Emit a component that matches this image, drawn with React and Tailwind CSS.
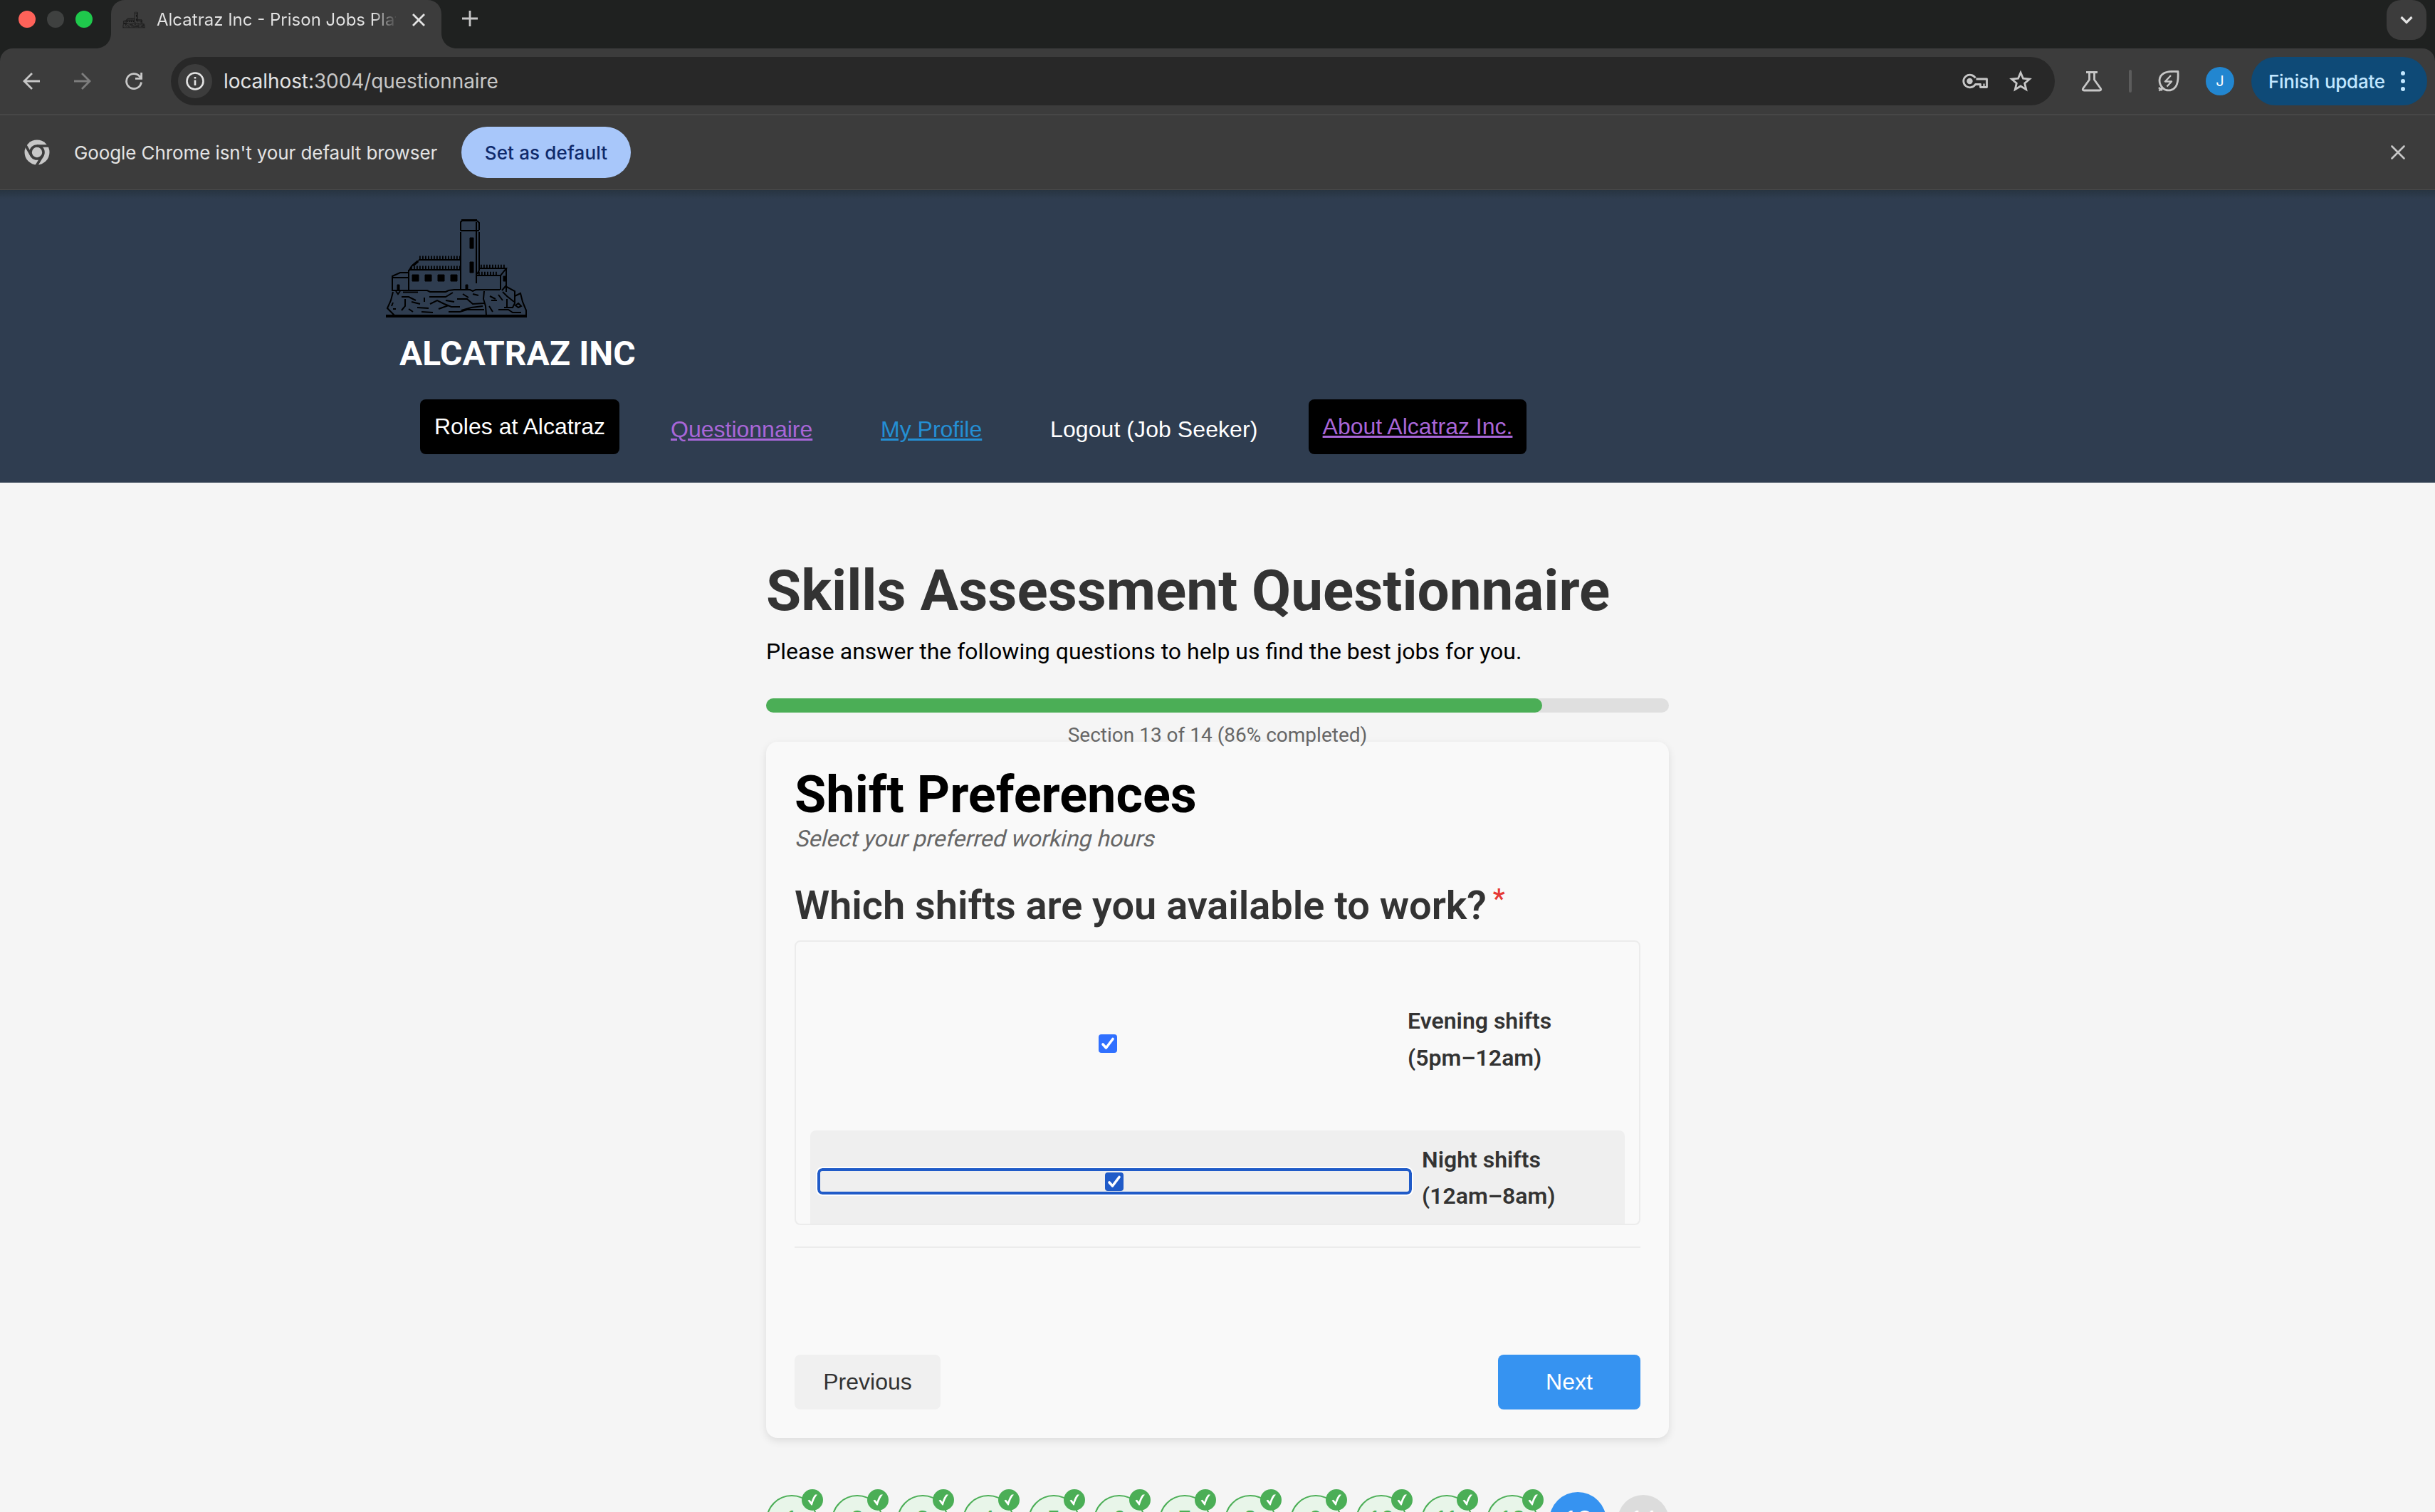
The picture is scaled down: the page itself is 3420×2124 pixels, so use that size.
import React from "react";

function LogoArt({ className, color = "#000", line = 2 }) {
  return (
    <svg viewBox="0 0 198 138" className={className} fill="none" stroke={color} strokeWidth={line}>
      <path d="M0 136H198" strokeWidth="4" />
      <path d="M106 1.500H128" strokeWidth="3" />
      <path d="M105 16V4L107 2M105 16H131M105 18V98M127 4V90M128 2L131 5V15M131 18V72M127 4V16" />
      <path d="M118 26h5v15h-5zM118 60h5v15h-5zM112 92h3v7h-3z" fill={color} strokeWidth="1" />
      <path d="M46 57H104M46 58L36 66L32 73M32 71V100M32 71H104" />
      <path d="M38 65L45 59" strokeWidth="3.500" />
      <path d="M47 54H104" strokeWidth="5" strokeDasharray="1.800 2.200" />
      <path d="M35 68H104" strokeWidth="5" strokeDasharray="1.800 2.200" />
      <path d="M37 78h9v9h-9zM55 78h9v9h-9zM73 78h9v9h-9zM91 78h9v9h-9z" fill={color} strokeWidth="1" />
      <path d="M31 82H9V100H31M9 82V80L20 75H31" />
      <path d="M16 92h3v8h-3z" fill={color} strokeWidth="1" />
      <path d="M128 79H161L169 69H131M161 79V99M169 69V102M131 72L128 77" />
      <path d="M133 66H169M130 76H158" strokeWidth="4.500" strokeDasharray="1.800 2.200" />
      <path d="M165 80h3v7h-3z" fill={color} strokeWidth="1" />
      <path d="M9 100H58L62 102H84L88 100L96 99H118L122 101L126 99H160" />
      <path d="M10 102L7 114L2 125L12 135M14 101L17 105L20 101M24 102.500H45M22 109H32L42 114M27 112V122L22 128M36 116L48 119M54 110V116M61 109H84L94 103M62 119L72 114L82 119L92 123H104M44 124L60 125M50 130L66 131M74 126L88 121M88 130H104L114 127H138M100 112H114L122 119L138 118M108 105L116 110M122 105L130 107M106 128L120 124L136 122M138 101L137 112L140 122L141 135M146 108L154 112M148 114H156M145 122L150 130M158 106L164 114M158 127H172L178 131H190M163 100L168 94L181 101V118L178 124H166M181 108L189 104L192 116L197 128V135M170 112V124M186 118L190 122L186 124L182 121ZM164 102L170 108L180 116M10 117L8 122M10 126H14M32 126L38 130M84 114L96 116" />
    </svg>
  );
}

function TabShape() {
  return (
    <svg className="block h-[68px] w-[508px]" viewBox="0 0 508 68" fill="#3c3c3c">
      <path d="M0 68C14 68 22 58 22 46V20C22 8 30 0 42 0H466C478 0 486 8 486 20V46C486 58 494 68 508 68Z" />
    </svg>
  );
}

function TabStrip() {
  return (
    <div className="flex h-[68px] bg-[#1f2120]">
      <div className="flex items-center gap-4 pl-[26px] pb-[14px]">
        <span className="size-6 rounded-full bg-[#ff6259]" />
        <span className="size-6 rounded-full bg-[#3f4140]" />
        <span className="size-6 rounded-full bg-[#1fc94c]" />
      </div>
      <div className="relative ml-[4px] w-[508px]">
        <TabShape />
        <div className="absolute inset-0 flex items-center pb-[12px] pl-[38px]">
          <LogoArt className="h-[30px] w-8" color="#151515" line={4} />
          <span className="ml-[16px] w-[336px] overflow-hidden whitespace-nowrap bg-linear-to-r from-[#e3e3e3] from-90% to-[#e3e3e3]/10 bg-clip-text text-[24px] leading-8 text-transparent">
            Alcatraz Inc - Prison Jobs Platform
          </span>
          <svg className="ml-[23px] size-[18px]" viewBox="0 0 18 18" stroke="#e3e3e3" strokeWidth="2.800">
            <path d="M1 1L17 17M17 1L1 17" />
          </svg>
        </div>
      </div>
      <svg className="ml-[7px] mt-[15px] size-[22px]" viewBox="0 0 22 22" stroke="#c7c7c7" strokeWidth="2.800">
        <path d="M11 0V22M0 11H22" />
      </svg>
      <div className="ml-auto mr-3 flex h-14 w-14 items-center justify-center rounded-[20px] bg-[#3c3c3c]">
        <svg className="size-[18px]" viewBox="0 0 18 18" fill="none" stroke="#e3e3e3" strokeWidth="3.200">
          <path d="M1.500 5L9 12.500L16.500 5" />
        </svg>
      </div>
    </div>
  );
}

function Toolbar() {
  return (
    <div className="bg-[#1f2120]">
      <div className="flex h-[92px] items-center rounded-t-[18px] bg-[#3c3c3c]">
        <svg className="ml-8 size-6" viewBox="0 0 24 24" fill="none" stroke="#c7c7c7" strokeWidth="2.800">
          <path d="M24 12H2M13 1L2 12L13 23" />
        </svg>
        <svg className="ml-12 size-6" viewBox="0 0 24 24" fill="none" stroke="#7d7d7d" strokeWidth="2.800">
          <path d="M0 12H22M11 1L22 12L11 23" />
        </svg>
        <svg className="ml-12 size-6" viewBox="0 0 24 24" fill="none" stroke="#c7c7c7" strokeWidth="2.800">
          <path d="M22.500 13.500A10.500 10.500 0 1 1 20 5.200L22.500 8M22.600 0V8.400H14" />
        </svg>
        <div className="ml-10 flex h-[68px] w-[2646px] items-center rounded-full bg-[#282828] pl-[10px] pr-8">
          <span className="flex size-12 items-center justify-center rounded-full bg-[#3c3c3c]">
            <svg className="size-[26px]" viewBox="0 0 26 26" fill="none" stroke="#e3e3e3" strokeWidth="2.600">
              <circle cx="13" cy="13" r="11.500" />
              <path d="M13 11.500V19M13 7V9.600" />
            </svg>
          </span>
          <span className="ml-4 text-[28px] leading-9 tracking-[-0.08px] text-[#c7c7c7]">
            <span className="text-[#e3e3e3]">localhost:</span>3004/questionnaire
          </span>
          <svg className="ml-auto h-6 w-[37px]" viewBox="0 0 37 24" fill="none" stroke="#c7c7c7" strokeWidth="2.800">
            <path d="M18.500 7.500A9 8.800 0 1 0 18.500 16.500H25.500V20.500H34.500V9H19.500" strokeLinejoin="round" />
            <path d="M30.500 15.500V20" strokeWidth="2.200" />
            <circle cx="10.500" cy="12" r="4.200" fill="#c7c7c7" stroke="none" />
          </svg>
          <svg className="ml-[29px] size-8" viewBox="0 0 32 32" fill="none" stroke="#c7c7c7" strokeWidth="2.800">
            <path d="M16 4L19.500 12.200L28.500 13L21.700 18.900L23.700 27.600L16 23L8.300 27.600L10.300 18.900L3.500 13L12.500 12.200Z" />
          </svg>
        </div>
        <svg className="ml-[36px] h-[30px] w-8" viewBox="0 0 32 30" fill="none" stroke="#c7c7c7" strokeWidth="2.800" strokeLinejoin="round">
          <path d="M8 2.500H24M12.500 3V13L3.500 25.500Q2.500 28 5 28H27Q29.500 28 28.500 25.500L19.500 13V3" />
        </svg>
        <span className="ml-9 h-8 w-1 rounded-full bg-[#5c5c5c]" />
        <svg className="ml-9 size-[32px]" viewBox="0 0 32 32" fill="none" stroke="#c7c7c7" strokeWidth="2.800" strokeLinejoin="round">
          <path d="M2.500 29.500L7 25C1 18 2 9 9 5Q15 1.500 29 2.500Q30 17 26 23.500C21 30.500 12 30.500 7 25M2 25L7 29" />
          <path d="M19 8L11 16.500H20L13.500 23.500" strokeWidth="2.400" />
        </svg>
        <span className="ml-9 flex size-10 items-center justify-center rounded-full bg-[#2286d0] text-[20px] text-white">J</span>
        <div className="ml-[24px] flex h-[68px] w-[247px] items-center rounded-full bg-[#0e4a77] pl-6">
          <span className="w-[164px] whitespace-nowrap text-[26px] font-medium tracking-[-0.25px] text-[#c2e7ff]">Finish update</span>
          <svg className="ml-[22px] h-7 w-[6px]" viewBox="0 0 6 28" fill="#c2e7ff">
            <circle cx="3" cy="3" r="3" />
            <circle cx="3" cy="14" r="3" />
            <circle cx="3" cy="25" r="3" />
          </svg>
        </div>
      </div>
    </div>
  );
}

function InfoBar() {
  return (
    <div className="flex h-[107px] items-center border-b border-t-2 border-b-[#4a4a4a] border-t-[#474747] bg-[#3c3c3c] pl-[34px]">
      <svg className="size-9" viewBox="0 0 36 36">
        <circle cx="18" cy="18" r="17.500" fill="#c7c7c7" />
        <circle cx="18" cy="18" r="9" fill="#c7c7c7" stroke="#3c3c3c" strokeWidth="3.600" />
        <path d="M18 9H36M10.200 22.500L1.500 7.500M25.800 22.500L17 37" stroke="#3c3c3c" strokeWidth="3.600" />
      </svg>
      <span className="ml-[34px] w-[510px] whitespace-nowrap text-[26px] tracking-[-0.1px] text-[#e3e3e3]">
        Google Chrome isn&apos;t your default browser
      </span>
      <button className="ml-[34px] h-[72px] w-[238px] rounded-full bg-[#a8c7fa] text-[26px] font-medium tracking-[0.15px] text-[#0f2a6b]">
        Set as default
      </button>
      <svg className="ml-auto mr-[42px] size-5" viewBox="0 0 20 20" stroke="#c7c7c7" strokeWidth="2.600" strokeLinecap="round">
        <path d="M1.500 1.500L18.500 18.500M18.500 1.500L1.500 18.500" />
      </svg>
    </div>
  );
}

function SiteHeader() {
  return (
    <header className="h-[411px] bg-[#2f3d50] bg-linear-to-b from-[#273441] from-0% to-[#2f3d50] to-[3%] pl-[542px] pt-[41px]">
      <LogoArt className="block h-[138px] w-[198px]" />
      <div className="ml-[19px] mt-[21px] h-[60px] whitespace-nowrap font-[Roboto] text-[48px] font-bold leading-[60px] tracking-[0.1px] text-white">
        ALCATRAZ INC
      </div>
      <nav className="ml-12 mt-[34px] flex h-[77px] items-start whitespace-nowrap font-['Liberation_Sans',Arial,sans-serif] text-[32px] leading-[37px] text-white">
        <a className="h-[77px] w-[280px] rounded-[8px] bg-black pt-5 text-center">Roles at Alcatraz</a>
        <a className="ml-[72px] mt-6 w-[199px] text-[#a866d8] underline">Questionnaire</a>
        <a className="ml-[96px] mt-6 w-[143px] text-[#248fd4] underline">My Profile</a>
        <a className="ml-[95px] mt-6 w-[290px] tracking-[0.08px]">Logout (Job Seeker)</a>
        <a className="ml-[73px] h-[77px] w-[306px] rounded-[8px] bg-black pt-5 text-center text-[#a866d8] underline">
          About Alcatraz Inc.
        </a>
      </nav>
    </header>
  );
}

function CheckBox({ className }) {
  return (
    <span className={"flex size-[26px] items-center justify-center rounded-[4px] " + className}>
      <svg className="size-[22px]" viewBox="0 0 22 22" fill="none" stroke="#fff" strokeWidth="3.600" strokeLinecap="round" strokeLinejoin="round">
        <path d="M4 12L8.500 17L18 4.500" />
      </svg>
    </span>
  );
}

function ShiftOptions() {
  return (
    <div className="h-[400px] overflow-hidden rounded-[8px] border-2 border-[#ececec] px-5">
      <div className="flex h-[265px] items-center pt-[20px]">
        <div className="flex w-[836px] justify-center">
          <CheckBox className="bg-[#3070ff]" />
        </div>
        <div className="ml-[3px] pb-[12px] leading-[52px]">Evening shifts<br />(5pm–12am)</div>
      </div>
      <div className="flex h-[160px] items-start rounded-[8px] bg-[#efefef] pl-[10px]">
        <div className="mt-[53px] flex h-[37px] w-[835px] items-center justify-center rounded-[7px] border-4 border-[#205bc8] pr-[2px] outline-2 outline-white">
          <CheckBox className="bg-[#205bc8]" />
        </div>
        <div className="ml-[14px] pt-[16px] leading-[51px]">Night shifts<br />(12am–8am)</div>
      </div>
    </div>
  );
}

function Step({ n }) {
  if (n === 13)
    return (
      <span className="-m-1 flex size-20 shrink-0 items-center justify-center rounded-full bg-[#3693f1] pb-[6px] text-[35px] text-white">13</span>
    );
  if (n === 14)
    return <span className="flex size-[72px] shrink-0 items-center justify-center rounded-full bg-[#dcdcdc] pb-[6px] text-white">14</span>;
  return (
    <span className="relative flex size-[72px] shrink-0 items-center justify-center rounded-full border-2 border-[#4bae56] bg-[#e8f5e9] pb-[6px] text-[#4bae56]">
      {n}
      <span className="absolute -right-[10px] -top-[10px] flex size-[30px] items-center justify-center rounded-full bg-[#4bae56]">
        <svg className="h-[16px] w-[14px]" viewBox="0 0 14 16" fill="#fff">
          <path d="M0.500 8.800L3 7.800L5.500 10.800C6.800 6.500 8.800 2.500 11 0.500H14C10.800 4 8.500 9 6.800 15.500H5.500Z" />
        </svg>
      </span>
    </span>
  );
}

const steps = [1, 2, 3, 4, 5, 6, 7, 8, 9, 10, 11, 12, 13, 14];

function Questionnaire() {
  return (
    <main className="mx-auto flex w-[1268px] flex-col pt-[105px] font-[Roboto]">
      <h1 className="h-[94px] whitespace-nowrap text-[80px] font-bold leading-[94px] text-[#333]">Skills Assessment Questionnaire</h1>
      <p className="mt-[12px] h-[52px] whitespace-nowrap text-[32px] leading-[52px] text-black">
        Please answer the following questions to help us find the best jobs for you.
      </p>
      <div className="mt-[40px] h-5 rounded-[10px] bg-[#dfdfdf]">
        <div className="h-5 w-[86%] rounded-[10px] bg-[#4bae56]" />
      </div>
      <p className="relative mt-[10px] h-[31px] text-center text-[28px] leading-[44px] text-[#666]">Section 13 of 14 (86% completed)</p>
      <section className="h-[978px] rounded-[16px] bg-[#f9f9f9] px-10 shadow-[0_4px_12px_rgba(0,0,0,0.1)]">
        <h2 className="h-[84px] pt-[33px] text-[72px] font-bold leading-[84px] text-black">Shift Preferences</h2>
        <p className="mt-[26px] h-[52px] text-[32px] leading-[52px] text-[#666]">
          <span className="inline-block origin-[0_37px] -skew-x-[14deg]">Select your preferred working hours</span>
        </p>
        <h3 className="mt-[32px] flex h-[85px] items-start text-[56px] font-semibold leading-[72px] tracking-[-0.06px] text-[#333]">
          <span className="whitespace-nowrap">Which shifts are you available to work?</span>
          <span className="ml-[9px] text-[38px] font-medium leading-[54px] text-[#e53935]">*</span>
        </h3>
        <div className="text-[32px] font-semibold text-[#333]">
          <ShiftOptions />
        </div>
        <div className="mt-[30px] h-[2px] bg-[#ececec]" />
        <div className="mt-[150px] flex justify-between font-['Liberation_Sans',Arial,sans-serif] text-[32px] leading-[37px]">
          <button className="h-[77px] w-[205px] rounded-[8px] bg-[#f0f0f0] text-[#333]">Previous</button>
          <button className="h-[77px] w-[200px] rounded-[8px] bg-[#3693f1] text-white">Next</button>
        </div>
      </section>
      <div className="mt-20 flex justify-between font-['Liberation_Sans',Arial,sans-serif] text-[32px] leading-[37px]">
        {steps.map((n) => (
          <Step key={n} n={n} />
        ))}
      </div>
    </main>
  );
}

export default function App() {
  return (
    <div className="h-[2124px] w-[3420px] overflow-hidden bg-[#f5f5f5] font-[Inter,sans-serif]">
      <TabStrip />
      <Toolbar />
      <InfoBar />
      <SiteHeader />
      <Questionnaire />
    </div>
  );
}
